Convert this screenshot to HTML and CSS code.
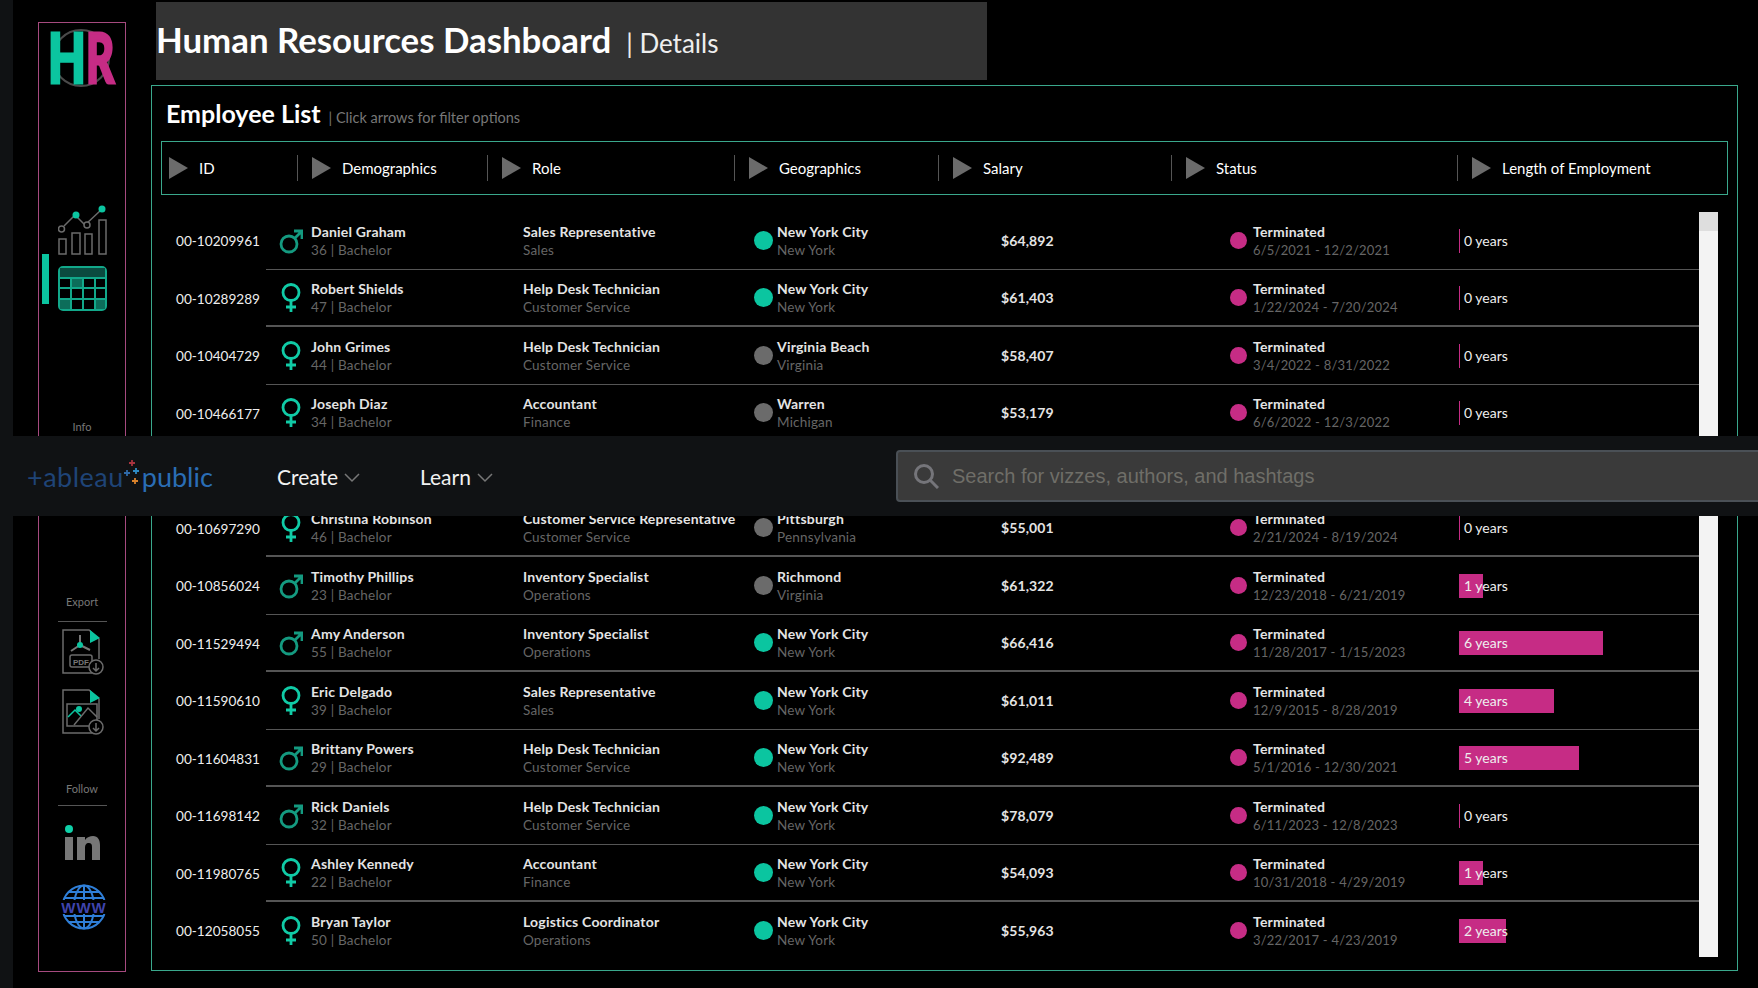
FILE: index.html
```html
<!DOCTYPE html>
<html lang="en">

<head>
    <meta charset="UTF-8">
    <title>Human Resources Dashboard</title>
    <link rel="stylesheet" href="styles.css">
</head>

<body>
    <div class="page">
        <div class="strip"></div>

        <!-- Side navigation -->
        <div class="sidebar">
            <svg class="hr-logo" width="78" height="76" viewBox="0 0 78 76">
                <circle cx="34" cy="35" r="28" fill="none" stroke="#4a4a4a" stroke-width="2" />
                <text transform="translate(1 60) scale(0.72 1)" class="hr-h">H</text>
                <text transform="translate(39 60) scale(0.64 1)" class="hr-r">R</text>
            </svg>

            <svg class="chart-icon" width="50" height="50" viewBox="0 0 50 50" fill="none" stroke="#6b6b6b" stroke-width="1.5">
                <rect x="1" y="34" width="7" height="15" />
                <rect x="14" y="28" width="8" height="21" />
                <rect x="27" y="29" width="7" height="20" />
                <rect x="41" y="15" width="7" height="34" />
                <path d="M6 21 L17 10 L27 20 L43 5" />
                <circle cx="3.500" cy="24" r="3" fill="#000" />
                <circle cx="29" cy="20" r="3" fill="#000" />
                <circle cx="18" cy="10" r="3.500" fill="#0bc5a0" stroke="none" />
                <circle cx="44" cy="4" r="3.500" fill="#0bc5a0" stroke="none" />
            </svg>

            <div class="nav-active">
                <div class="active-mark"></div>
                <svg width="49" height="45" viewBox="0 0 49 45" fill="none" stroke="#12a88a" stroke-width="2">
                    <rect x="1" y="1" width="47" height="43" rx="4" />
                    <path d="M2 2 H47 V12 H2 Z" fill="#0b4a3f" stroke="none" />
                    <path d="M1 12 H48 M1 22 H48 M1 33 H48 M13 12 V44 M25 12 V44 M37 12 V44" />
                    <rect x="14" y="13" width="10" height="8" fill="#0c6d5a" stroke="none" />
                    <rect x="2" y="34" width="10" height="9" fill="#0c6d5a" stroke="none" />
                    <rect x="38" y="34" width="9" height="9" fill="#0c6d5a" stroke="none" />
                </svg>
            </div>

            <div class="side-label info-label">Info</div>

            <div class="side-label export-label">Export</div>
            <div class="side-rule export-rule"></div>
            <svg class="file-icon" width="44" height="46" viewBox="0 0 44 46" fill="none" stroke="#6b6b6b" stroke-width="1.500">
                <path d="M30 44 H1 V1 H27 L37 10 V30" />
                <path d="M28 1 L38 9 L28 14 Z" fill="#0bc5a0" stroke="none" />
                <path d="M18 6 V16 M18 16 L9 22 M18 16 L28 21" stroke="#777" stroke-width="2" />
                <circle cx="18" cy="16" r="3" fill="#0bc5a0" stroke="none" />
                <rect x="8" y="26" width="22" height="12" rx="2" />
                <text x="11" y="35.500" class="pdf-text">PDF</text>
                <circle cx="34" cy="38" r="7" fill="#000" />
                <path d="M34 34 V42 M31 39 L34 42 L37 39" />
            </svg>
            <svg class="file-icon image-icon" width="44" height="46" viewBox="0 0 44 46" fill="none" stroke="#6b6b6b" stroke-width="1.500">
                <path d="M30 44 H1 V1 H27 L37 10 V30" />
                <path d="M28 1 L38 9 L28 14 Z" fill="#0bc5a0" stroke="none" />
                <rect x="5" y="15" width="30" height="22" />
                <path d="M6 28 L13 21 L19 27" stroke="#0bc5a0" />
                <path d="M12 36 L26 19 L35 28" />
                <circle cx="17" cy="20" r="3" fill="#0bc5a0" stroke="none" />
                <circle cx="34" cy="38" r="7" fill="#000" />
                <path d="M34 34 V42 M31 39 L34 42 L37 39" />
            </svg>

            <div class="side-label follow-label">Follow</div>
            <div class="side-rule"></div>
            <svg class="in-icon" width="37" height="36" viewBox="0 0 37 36">
                <rect x="1" y="12" width="8" height="23" fill="#777" />
                <path d="M13 12 H21 V15 C23 12 26 11 29 11 C34 11 36 15 36 20 V35 H28 V22 C28 19 27 18 25 18 C22 18 21 20 21 23 V35 H13 Z" fill="#777" />
                <circle cx="5" cy="4" r="4" fill="#0fd0a8" />
            </svg>
            <svg class="globe-icon" width="46" height="46" viewBox="0 0 46 46" fill="none" stroke="#2f7fd8" stroke-width="2">
                <circle cx="23" cy="23" r="21.500" />
                <ellipse cx="23" cy="23" rx="10" ry="21.500" />
                <path d="M23 1 V45 M7 8 H39 M3 14 H43 M3 32 H43 M7 38 H39" />
                <rect x="0" y="16" width="46" height="14" fill="#000" stroke="none" />
                <text x="23" y="28.500" class="www-text" text-anchor="middle">WWW</text>
            </svg>
        </div>

        <div class="main">
            <div class="title-bar">
                <h1>Human Resources Dashboard</h1>
                <span class="title-sub">| Details</span>
            </div>

            <div class="panel">
                <div class="panel-title">
                    <h2>Employee List</h2>
                    <span class="panel-hint">| Click arrows for filter options</span>
                </div>

                <div class="filter-bar">
                    <div class="filter col-id"><i class="arrow"></i>ID</div>
                    <div class="filter col-demo"><i class="arrow"></i>Demographics</div>
                    <div class="filter col-role"><i class="arrow"></i>Role</div>
                    <div class="filter col-geo"><i class="arrow"></i>Geographics</div>
                    <div class="filter col-sal"><i class="arrow"></i>Salary</div>
                    <div class="filter col-stat"><i class="arrow"></i>Status</div>
                    <div class="filter col-len"><i class="arrow"></i>Length of Employment</div>
                </div>

                <div class="table-wrap">
                    <div class="rows">
                        <div class="row">
                            <div class="emp-id">00-10209961</div>
                            <div class="line-cell">
                                <div class="demo"><svg class="gender"><use href="#male" /></svg><div><b>Daniel Graham</b><small>36 | Bachelor</small></div></div>
                                <div class="role"><b>Sales Representative</b><small>Sales</small></div>
                                <div class="geo"><i class="dot teal"></i><div><b>New York City</b><small>New York</small></div></div>
                                <div class="salary">$64,892</div>
                                <div class="status"><i class="dot pink"></i><div><b>Terminated</b><small>6/5/2021 - 12/2/2021</small></div></div>
                                <div class="length"><i class="bar" style="width: 1px"></i><span>0 years</span></div>
                            </div>
                        </div>
                        <div class="row">
                            <div class="emp-id">00-10289289</div>
                            <div class="line-cell">
                                <div class="demo"><svg class="gender"><use href="#female" /></svg><div><b>Robert Shields</b><small>47 | Bachelor</small></div></div>
                                <div class="role"><b>Help Desk Technician</b><small>Customer Service</small></div>
                                <div class="geo"><i class="dot teal"></i><div><b>New York City</b><small>New York</small></div></div>
                                <div class="salary">$61,403</div>
                                <div class="status"><i class="dot pink"></i><div><b>Terminated</b><small>1/22/2024 - 7/20/2024</small></div></div>
                                <div class="length"><i class="bar" style="width: 1px"></i><span>0 years</span></div>
                            </div>
                        </div>
                        <div class="row">
                            <div class="emp-id">00-10404729</div>
                            <div class="line-cell">
                                <div class="demo"><svg class="gender"><use href="#female" /></svg><div><b>John Grimes</b><small>44 | Bachelor</small></div></div>
                                <div class="role"><b>Help Desk Technician</b><small>Customer Service</small></div>
                                <div class="geo"><i class="dot grey"></i><div><b>Virginia Beach</b><small>Virginia</small></div></div>
                                <div class="salary">$58,407</div>
                                <div class="status"><i class="dot pink"></i><div><b>Terminated</b><small>3/4/2022 - 8/31/2022</small></div></div>
                                <div class="length"><i class="bar" style="width: 1px"></i><span>0 years</span></div>
                            </div>
                        </div>
                        <div class="row">
                            <div class="emp-id">00-10466177</div>
                            <div class="line-cell">
                                <div class="demo"><svg class="gender"><use href="#female" /></svg><div><b>Joseph Diaz</b><small>34 | Bachelor</small></div></div>
                                <div class="role"><b>Accountant</b><small>Finance</small></div>
                                <div class="geo"><i class="dot grey"></i><div><b>Warren</b><small>Michigan</small></div></div>
                                <div class="salary">$53,179</div>
                                <div class="status"><i class="dot pink"></i><div><b>Terminated</b><small>6/6/2022 - 12/3/2022</small></div></div>
                                <div class="length"><i class="bar" style="width: 1px"></i><span>0 years</span></div>
                            </div>
                        </div>
                        <!-- this row sits under the site bar -->
                        <div class="row">
                            <div class="emp-id"></div>
                            <div class="line-cell"></div>
                        </div>
                        <div class="row">
                            <div class="emp-id">00-10697290</div>
                            <div class="line-cell">
                                <div class="demo"><svg class="gender"><use href="#female" /></svg><div><b>Christina Robinson</b><small>46 | Bachelor</small></div></div>
                                <div class="role"><b>Customer Service Representative</b><small>Customer Service</small></div>
                                <div class="geo"><i class="dot grey"></i><div><b>Pittsburgh</b><small>Pennsylvania</small></div></div>
                                <div class="salary">$55,001</div>
                                <div class="status"><i class="dot pink"></i><div><b>Terminated</b><small>2/21/2024 - 8/19/2024</small></div></div>
                                <div class="length"><i class="bar" style="width: 1px"></i><span>0 years</span></div>
                            </div>
                        </div>
                        <div class="row">
                            <div class="emp-id">00-10856024</div>
                            <div class="line-cell">
                                <div class="demo"><svg class="gender"><use href="#male" /></svg><div><b>Timothy Phillips</b><small>23 | Bachelor</small></div></div>
                                <div class="role"><b>Inventory Specialist</b><small>Operations</small></div>
                                <div class="geo"><i class="dot grey"></i><div><b>Richmond</b><small>Virginia</small></div></div>
                                <div class="salary">$61,322</div>
                                <div class="status"><i class="dot pink"></i><div><b>Terminated</b><small>12/23/2018 - 6/21/2019</small></div></div>
                                <div class="length"><i class="bar" style="width: 24px"></i><span>1 years</span></div>
                            </div>
                        </div>
                        <div class="row">
                            <div class="emp-id">00-11529494</div>
                            <div class="line-cell">
                                <div class="demo"><svg class="gender"><use href="#male" /></svg><div><b>Amy Anderson</b><small>55 | Bachelor</small></div></div>
                                <div class="role"><b>Inventory Specialist</b><small>Operations</small></div>
                                <div class="geo"><i class="dot teal"></i><div><b>New York City</b><small>New York</small></div></div>
                                <div class="salary">$66,416</div>
                                <div class="status"><i class="dot pink"></i><div><b>Terminated</b><small>11/28/2017 - 1/15/2023</small></div></div>
                                <div class="length"><i class="bar" style="width: 144px"></i><span>6 years</span></div>
                            </div>
                        </div>
                        <div class="row">
                            <div class="emp-id">00-11590610</div>
                            <div class="line-cell">
                                <div class="demo"><svg class="gender"><use href="#female" /></svg><div><b>Eric Delgado</b><small>39 | Bachelor</small></div></div>
                                <div class="role"><b>Sales Representative</b><small>Sales</small></div>
                                <div class="geo"><i class="dot teal"></i><div><b>New York City</b><small>New York</small></div></div>
                                <div class="salary">$61,011</div>
                                <div class="status"><i class="dot pink"></i><div><b>Terminated</b><small>12/9/2015 - 8/28/2019</small></div></div>
                                <div class="length"><i class="bar" style="width: 95px"></i><span>4 years</span></div>
                            </div>
                        </div>
                        <div class="row">
                            <div class="emp-id">00-11604831</div>
                            <div class="line-cell">
                                <div class="demo"><svg class="gender"><use href="#male" /></svg><div><b>Brittany Powers</b><small>29 | Bachelor</small></div></div>
                                <div class="role"><b>Help Desk Technician</b><small>Customer Service</small></div>
                                <div class="geo"><i class="dot teal"></i><div><b>New York City</b><small>New York</small></div></div>
                                <div class="salary">$92,489</div>
                                <div class="status"><i class="dot pink"></i><div><b>Terminated</b><small>5/1/2016 - 12/30/2021</small></div></div>
                                <div class="length"><i class="bar" style="width: 120px"></i><span>5 years</span></div>
                            </div>
                        </div>
                        <div class="row">
                            <div class="emp-id">00-11698142</div>
                            <div class="line-cell">
                                <div class="demo"><svg class="gender"><use href="#male" /></svg><div><b>Rick Daniels</b><small>32 | Bachelor</small></div></div>
                                <div class="role"><b>Help Desk Technician</b><small>Customer Service</small></div>
                                <div class="geo"><i class="dot teal"></i><div><b>New York City</b><small>New York</small></div></div>
                                <div class="salary">$78,079</div>
                                <div class="status"><i class="dot pink"></i><div><b>Terminated</b><small>6/11/2023 - 12/8/2023</small></div></div>
                                <div class="length"><i class="bar" style="width: 1px"></i><span>0 years</span></div>
                            </div>
                        </div>
                        <div class="row">
                            <div class="emp-id">00-11980765</div>
                            <div class="line-cell">
                                <div class="demo"><svg class="gender"><use href="#female" /></svg><div><b>Ashley Kennedy</b><small>22 | Bachelor</small></div></div>
                                <div class="role"><b>Accountant</b><small>Finance</small></div>
                                <div class="geo"><i class="dot teal"></i><div><b>New York City</b><small>New York</small></div></div>
                                <div class="salary">$54,093</div>
                                <div class="status"><i class="dot pink"></i><div><b>Terminated</b><small>10/31/2018 - 4/29/2019</small></div></div>
                                <div class="length"><i class="bar" style="width: 24px"></i><span>1 years</span></div>
                            </div>
                        </div>
                        <div class="row">
                            <div class="emp-id">00-12058055</div>
                            <div class="line-cell">
                                <div class="demo"><svg class="gender"><use href="#female" /></svg><div><b>Bryan Taylor</b><small>50 | Bachelor</small></div></div>
                                <div class="role"><b>Logistics Coordinator</b><small>Operations</small></div>
                                <div class="geo"><i class="dot teal"></i><div><b>New York City</b><small>New York</small></div></div>
                                <div class="salary">$55,963</div>
                                <div class="status"><i class="dot pink"></i><div><b>Terminated</b><small>3/22/2017 - 4/23/2019</small></div></div>
                                <div class="length"><i class="bar" style="width: 47px"></i><span>2 years</span></div>
                            </div>
                        </div>
                    </div>
                    <div class="scrollbar"><div class="thumb"></div></div>
                </div>
            </div>
        </div>
    </div>

    <!-- Site bar over the viz -->
    <div class="site-bar">
        <div class="site-logo">
            <span class="logo-a">+ableau</span>
            <svg width="18" height="34" viewBox="0 0 18 34" fill="none" stroke-width="1.800">
                <path d="M8 1 V7 M5 4 H11" stroke="#a8343f" />
                <path d="M3 11 V17 M0 14 H6" stroke="#2f6aa8" />
                <path d="M12 9 V15 M9 12 H15" stroke="#2f8bc4" />
                <path d="M11 19 V25 M8 22 H14" stroke="#d9822b" />
            </svg>
            <span class="logo-b">public</span>
        </div>
        <div class="site-link">Create<svg class="chev" width="16" height="10" viewBox="0 0 16 10"><path d="M1 1 L8 8 L15 1" /></svg></div>
        <div class="site-link">Learn<svg class="chev" width="16" height="10" viewBox="0 0 16 10"><path d="M1 1 L8 8 L15 1" /></svg></div>
        <div class="search-box">
            <svg width="26" height="26" viewBox="0 0 26 26" fill="none" stroke="#75757a" stroke-width="3">
                <circle cx="11" cy="11" r="8.500" />
                <path d="M17 17 L25 25" />
            </svg>
            <span>Search for vizzes, authors, and hashtags</span>
        </div>
    </div>

    <svg class="defs" width="0" height="0">
        <symbol id="male" viewBox="0 0 24 30">
            <g fill="none" stroke="#149a80" stroke-width="2.800">
                <circle cx="10" cy="18" r="8" />
                <path d="M16 12 L22 6 M15 5 H23 V13" />
            </g>
        </symbol>
        <symbol id="female" viewBox="0 0 24 30">
            <g fill="none" stroke="#10cba6" stroke-width="2.800">
                <circle cx="12" cy="9.500" r="8" />
                <path d="M12 18 V29 M7 24 H17" />
            </g>
        </symbol>
    </svg>
</body>

</html>
```
FILE: styles.css
```css
* {
    margin: 0;
    padding: 0;
    box-sizing: border-box;
}

body {
    font-family: Lato, "Noto Sans", sans-serif;
    background: #000;
    color: #eee;
    height: 988px;
    overflow: hidden;
    position: relative;
}

.page {
    display: flex;
    height: 988px;
}

.strip {
    width: 13px;
    background: #101214;
}

/* Sidebar */
.sidebar {
    width: 88px;
    height: 950px;
    margin: 22px 0 0 25px;
    border: 1px solid #a64a7f;
    display: flex;
    flex-direction: column;
    align-items: center;
}

.hr-logo {
    align-self: flex-start;
    margin-left: 8px;
}

.hr-h,
.hr-r {
    font-family: Lato, sans-serif;
    font-weight: 900;
    font-size: 68px;
    stroke-width: 3px;
}

.hr-h {
    fill: #0bc5a0;
    stroke: #0bc5a0;
}

.hr-r {
    fill: #c62c85;
    stroke: #c62c85;
}

.chart-icon {
    margin-top: 106px;
    margin-left: 1px;
}

.nav-active {
    align-self: stretch;
    display: flex;
    align-items: flex-end;
    gap: 9px;
    margin-top: -1px;
    padding-left: 3px;
    height: 57px;
}

.active-mark {
    width: 7px;
    height: 50px;
    background: #0bc5a0;
    margin-bottom: 7px;
}

.side-label {
    font-size: 11px;
    color: #777;
}

.info-label {
    margin-top: 109px;
}

.export-label {
    margin-top: 162px;
}

.follow-label {
    margin-top: 47px;
}

.side-rule {
    width: 49px;
    height: 1px;
    background: #555;
    margin-top: 10px;
}

.export-rule {
    margin-top: 13px;
}

.file-icon {
    margin-top: 7px;
    margin-left: 3px;
}

.image-icon {
    margin-top: 14px;
}

.pdf-text {
    font-family: "Liberation Sans", sans-serif;
    font-size: 8px;
    font-weight: bold;
    fill: #777;
    stroke: none;
}

.in-icon {
    margin-top: 19px;
}

.globe-icon {
    margin-top: 23px;
    margin-left: 3px;
}

.www-text {
    font-family: "Liberation Sans", sans-serif;
    font-size: 15px;
    font-weight: bold;
    letter-spacing: 1px;
    fill: #3f44ad;
    stroke: none;
}

/* Main column */
.main {
    margin-left: 25px;
    width: 1587px;
}

.title-bar {
    width: 831px;
    height: 78px;
    margin: 2px 0 5px 5px;
    background: #333;
    display: flex;
    align-items: baseline;
    padding-top: 17px;
    gap: 15px;
}

.title-bar h1 {
    font-size: 34.800px;
    font-weight: bold;
    color: #fff;
}

.title-sub {
    font-size: 26px;
    color: #eee;
}

.panel {
    height: 886px;
    border: 1px solid #3aa88c;
    padding: 0 9px;
}

.panel-title {
    display: flex;
    align-items: baseline;
    gap: 8px;
    height: 55px;
    padding: 12px 0 0 5px;
}

.panel-title h2 {
    font-size: 25px;
    font-weight: bold;
    color: #fff;
}

.panel-hint {
    font-size: 14.500px;
    color: #777;
}

.filter-bar {
    display: flex;
    height: 54px;
    border: 1px solid #3aa88c;
    align-items: center;
    padding-bottom: 1px;
    font-size: 15px;
    color: #fff;
}

.filter {
    display: flex;
    align-items: center;
    height: 26px;
    border-left: 1px solid #555;
    padding-left: 14px;
}

.arrow {
    width: 0;
    height: 0;
    border-left: 19px solid #6b6b6b;
    border-top: 11px solid transparent;
    border-bottom: 11px solid transparent;
    margin-right: 11px;
}

.col-id {
    width: 135px;
    border-left: none;
    padding-left: 7px;
}

.col-demo {
    width: 190px;
}

.col-role {
    width: 247px;
}

.col-geo {
    width: 204px;
}

.col-sal {
    width: 233px;
}

.col-stat {
    width: 286px;
}

.col-len {
    flex: 1;
}

/* Rows */
.table-wrap {
    position: relative;
    margin-top: 17px;
    height: 745px;
    overflow: hidden;
}

.rows {
    width: 1538px;
}

.row {
    display: flex;
    height: 57.5px;
}

.emp-id {
    width: 105px;
    font-size: 13.600px;
    text-align: center;
    align-self: center;
    padding: 1px 0 0 9px;
}

.line-cell {
    flex: 1;
    display: flex;
    align-items: center;
    border-bottom: 1px solid #555;
    padding-top: 1px;
}

.row:nth-child(even) .line-cell {
    border-bottom-width: 2px;
}

.row b {
    display: block;
    font-size: 14px;
    font-weight: bold;
    letter-spacing: 0.2px;
    color: #e4e4e4;
    line-height: 18px;
}

.row small {
    display: block;
    font-size: 13.500px;
    letter-spacing: 0.2px;
    color: #666;
    line-height: 18px;
}

.demo {
    width: 257px;
    display: flex;
    align-items: center;
    gap: 8px;
    padding-left: 13px;
}

.gender {
    width: 24px;
    height: 30px;
}

.role {
    width: 231px;
}

.geo {
    width: 247px;
    display: flex;
    align-items: center;
    gap: 4px;
}

.dot {
    width: 19px;
    height: 19px;
    border-radius: 50%;
    flex: none;
}

.teal {
    background: #0bc5a0;
}

.grey {
    background: #6b6b6b;
}

.pink {
    background: #c62c85;
    width: 17px;
    height: 17px;
}

.salary {
    width: 229px;
    font-size: 14px;
    font-weight: bold;
    letter-spacing: 0.1px;
    color: #e4e4e4;
}

.status {
    width: 229px;
    display: flex;
    align-items: center;
    gap: 6px;
}

.status small {
    font-size: 13px;
}

.length {
    position: relative;
    height: 24px;
    font-size: 14px;
    color: #eee;
    display: flex;
    align-items: center;
    padding-left: 5px;
}

.bar {
    position: absolute;
    left: 0;
    top: 0;
    height: 24px;
    background: #c62c85;
}

.length span {
    position: relative;
}

.scrollbar {
    position: absolute;
    left: 1538px;
    top: 0;
    width: 19px;
    height: 745px;
    background: #f3f3f3;
}

.thumb {
    height: 19px;
    background: #dedede;
}

/* Site bar */
.site-bar {
    position: absolute;
    left: 13px;
    right: 0;
    top: 436px;
    height: 80px;
    background: #101214;
    display: flex;
    align-items: center;
}

.site-logo {
    display: flex;
    flex: none;
    align-items: center;
    width: 264px;
    padding-left: 14px;
    font-size: 27px;
}

.logo-a {
    color: #1f4477;
    letter-spacing: 0.5px;
}

.logo-b {
    color: #2a6db5;
}

.site-link {
    display: flex;
    flex: none;
    align-items: center;
    gap: 6px;
    width: 143px;
    font-size: 21px;
    color: #f2f2f2;
}

.chev {
    fill: none;
    stroke: #777;
    stroke-width: 1.5;
    margin-top: 4px;
}

.search-box {
    margin-left: 333px;
    flex: none;
    width: 900px;
    height: 52px;
    background: #3a3a3a;
    border: 2px solid #4a5056;
    border-radius: 4px;
    display: flex;
    align-items: center;
    gap: 13px;
    padding-left: 15px;
    font-family: "Liberation Sans", sans-serif;
    font-size: 20px;
    color: #6f6e68;
}

.defs {
    position: absolute;
}
```
